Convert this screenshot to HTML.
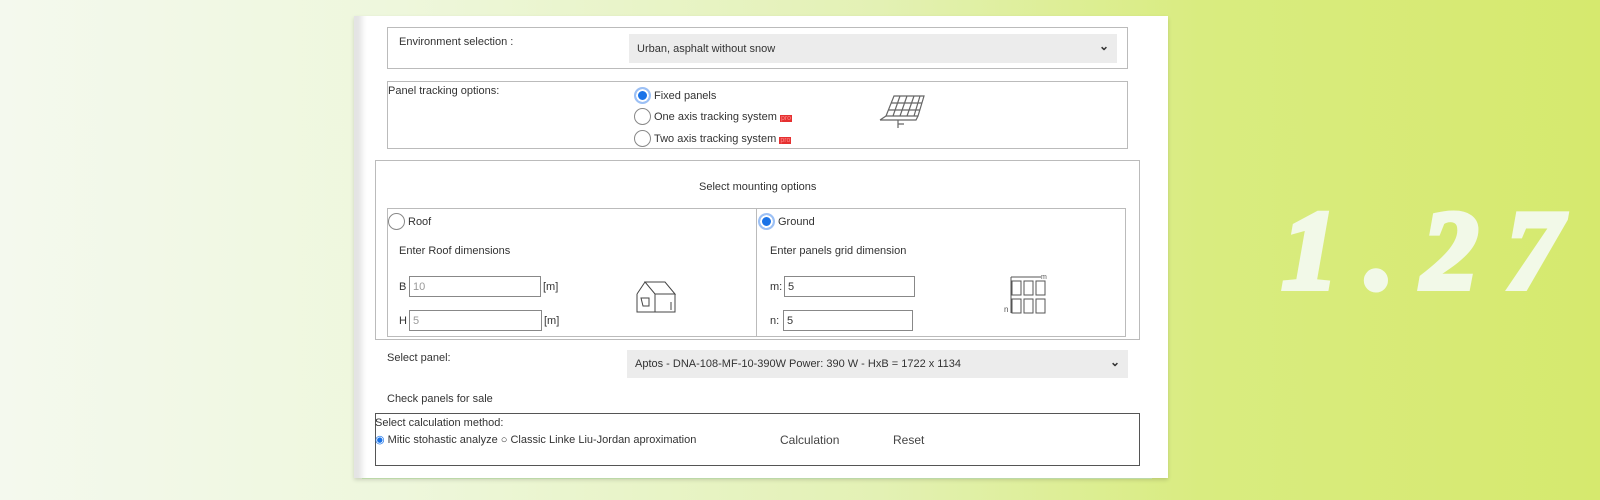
<!DOCTYPE html>
<html><head><style>
*{margin:0;padding:0;box-sizing:border-box}
body{width:1600px;height:500px;overflow:hidden;position:relative;background:linear-gradient(90deg,#f4f9ee 0%,#eef7dc 25%,#e3f1b4 55%,#d9ec80 75%,#d6e96e 100%);font-family:"Liberation Sans",sans-serif;font-size:11px;color:#333}
.card{position:absolute;left:354px;top:16px;width:814px;height:462px;background:#fff;box-shadow:inset 16px 0 6px -8px #e4e4e4,0 2px 4px rgba(0,0,0,.15)}
.a{position:absolute}
.box{position:absolute;border:1px solid #bbb}
.sel{position:absolute;background:#ececec;font-size:11px;padding-left:8px;display:flex;align-items:center}
.sel:after{content:"⌄";position:absolute;right:8px;top:5px;font-size:12px;font-weight:bold}
.r{position:absolute;width:17px;height:17px;border-radius:50%;border:1px solid #888;background:#fff}
.r.on{border:2px solid #9cc0f5;background:#1a73e8;box-shadow:inset 0 0 0 2px #fff}
.pro{background:#e53030;color:#f88;font-size:7px;padding:0 1px}
.in{position:absolute;border:1px solid #888;height:21px;padding-left:3px;font-size:11px;display:flex;align-items:center}
.big{position:absolute;left:1282px;top:195px;font-family:"Liberation Serif",serif;font-weight:bold;font-style:italic;font-size:112px;line-height:1;color:#f2f9e8;white-space:nowrap;-webkit-text-stroke:6px #f2f9e8;letter-spacing:28px}
</style></head><body>
<div class="card"></div>
<div class="box" style="left:387px;top:27px;width:741px;height:42px"></div>
<div class="a" style="left:399px;top:36px">Environment selection :</div>
<div class="sel" style="left:629px;top:34px;width:488px;height:29px">Urban, asphalt without snow</div>

<div class="box" style="left:387px;top:81px;width:741px;height:68px"></div>
<div class="a" style="left:388px;top:85px">Panel tracking options:</div>
<div class="r on" style="left:634px;top:87px"></div><div class="a" style="left:654px;top:90px">Fixed panels</div>
<div class="r" style="left:634px;top:108px"></div><div class="a" style="left:654px;top:111px">One axis tracking system <span class="pro">pro</span></div>
<div class="r" style="left:634px;top:130px"></div><div class="a" style="left:654px;top:133px">Two axis tracking system <span class="pro">pro</span></div>
<svg class="a" style="left:878px;top:92px" width="52" height="40" viewBox="0 0 52 40" fill="none" stroke="#666" stroke-width="1.2"><path d="M16 4L46 4L40 24L8 24Z M22 4L15 24 M29 4L22 24 M36 4L29 24 M42 4L36 24 M13 11L44 11 M10 18L42 18"/><path d="M2 28L8 24 M2 28L38 28L40 24 M20 28v8 M26 32h-6"/></svg>

<div class="box" style="left:375px;top:160px;width:765px;height:180px"></div>
<div class="a" style="left:699px;top:181px">Select mounting options</div>
<div class="box" style="left:387px;top:208px;width:370px;height:129px"></div>
<div class="box" style="left:756px;top:208px;width:370px;height:129px"></div>
<div class="r" style="left:388px;top:213px"></div><div class="a" style="left:408px;top:216px">Roof</div>
<div class="a" style="left:399px;top:245px">Enter Roof dimensions</div>
<div class="a" style="left:399px;top:281px">B</div><div class="in" style="left:409px;top:276px;width:132px;color:#999">10</div><div class="a" style="left:543px;top:281px">[m]</div>
<div class="a" style="left:399px;top:315px">H</div><div class="in" style="left:409px;top:310px;width:133px;color:#999">5</div><div class="a" style="left:544px;top:315px">[m]</div>
<svg class="a" style="left:635px;top:274px" width="46" height="40" viewBox="0 0 46 40" fill="none" stroke="#444" stroke-width="1"><path d="M10 8L30 8L40 20L20 20Z M2 20L10 8 M2 20L2 38L40 38L40 20 M20 20L20 38 M6 24h8v8h-6z M36 28v8"/></svg>
<div class="r on" style="left:758px;top:213px"></div><div class="a" style="left:778px;top:216px">Ground</div>
<div class="a" style="left:770px;top:245px">Enter panels grid dimension</div>
<div class="a" style="left:770px;top:281px">m:</div><div class="in" style="left:784px;top:276px;width:131px">5</div>
<div class="a" style="left:770px;top:315px">n:</div><div class="in" style="left:783px;top:310px;width:130px">5</div>
<svg class="a" style="left:1003px;top:272px" width="46" height="44" viewBox="0 0 46 44" fill="none" stroke="#555" stroke-width="1"><path d="M8 5h30 M8 5v36"/><rect x="9" y="9" width="9" height="14"/><rect x="21" y="9" width="9" height="14"/><rect x="33" y="9" width="9" height="14"/><rect x="9" y="27" width="9" height="14"/><rect x="21" y="27" width="9" height="14"/><rect x="33" y="27" width="9" height="14"/><text x="38" y="7" font-size="7" fill="#555" stroke="none">m</text><text x="1" y="40" font-size="8" fill="#555" stroke="none">n</text></svg>

<div class="a" style="left:387px;top:352px">Select panel:</div>
<div class="sel" style="left:627px;top:350px;width:501px;height:28px">Aptos - DNA-108-MF-10-390W Power: 390 W - HxB = 1722 x 1134</div>
<div class="a" style="left:387px;top:393px">Check panels for sale</div>

<div class="box" style="left:375px;top:413px;width:765px;height:53px;border-color:#555"></div>
<div class="a" style="left:375px;top:417px">Select calculation method:</div>
<div class="a" style="left:375px;top:433px"><span style="color:#1a73e8">◉</span> Mitic stohastic analyze ○ Classic Linke Liu-Jordan aproximation</div>
<div class="a" style="left:780px;top:433px;font-size:12px;color:#444">Calculation</div>
<div class="a" style="left:893px;top:433px;font-size:12px;color:#444">Reset</div>
<div class="a" style="left:362px;top:478px;width:790px;height:1px;background:#bcd8a8"></div>

<div class="big">1.27</div>
</body></html>
